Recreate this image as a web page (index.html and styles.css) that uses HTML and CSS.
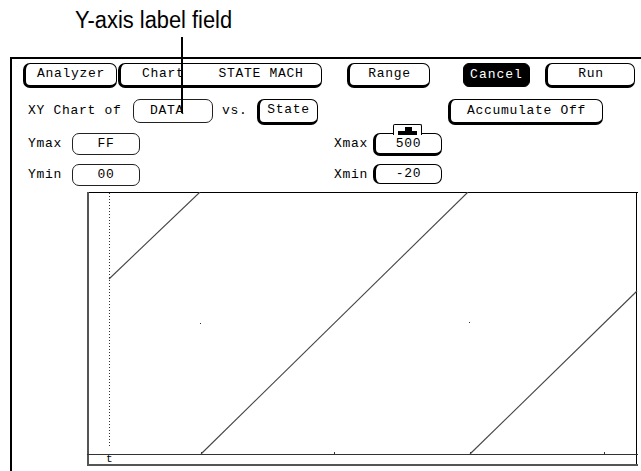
FILE: index.html
```html
<!DOCTYPE html>
<html lang="en">
<head>
    <meta charset="UTF-8">
    <title>XY Chart - Y-axis label field</title>
    <link rel="stylesheet" href="styles.css">
</head>
<body>
    <div class="callout">
        <span class="callout-text">Y-axis label field</span>
    </div>
    <div class="leader"></div>

    <div class="screen">
        <!-- top menu bar -->
        <div class="row row-menu">
            <div class="btn raised w-analyzer">Analyzer</div>
            <div class="btn raised w-chart left">Chart    STATE MACH</div>
            <div class="btn raised w-range">Range</div>
            <div class="btn inverse w-cancel">Cancel</div>
            <div class="btn raised w-run">Run</div>
        </div>

        <div class="row row-of">
            <span class="label w-xy">XY Chart of</span>
            <div class="btn flat w-data left">DATA</div>
            <span class="label w-vs">vs.</span>
            <div class="btn raised w-state">State</div>
            <div class="btn raised w-accum">Accumulate Off</div>
        </div>

        <div class="row row-limit">
            <span class="label w-ylabel">Ymax</span>
            <div class="btn flat w-yfield">FF</div>
            <span class="label w-xlabel">Xmax</span>
            <div class="btn raised w-xfield has-tab"><div class="tab"><svg width="29" height="11" viewBox="0 0 29 11"><rect x="12" y="3" width="7" height="5" fill="#000"/><rect x="5" y="7" width="19" height="4" fill="#000"/></svg></div>500</div>
        </div>

        <div class="row row-limit row-min">
            <span class="label w-ylabel">Ymin</span>
            <div class="btn flat w-yfield">00</div>
            <span class="label w-xlabel">Xmin</span>
            <div class="btn raised-left w-xfield">-20</div>
        </div>

        <div class="chart">
            <svg width="551" height="274" viewBox="0 0 551 274">
                <!-- frame -->
                <line x1="0" y1="0.5" x2="551" y2="0.5" stroke="#000"/>
                <line x1="1" y1="0" x2="1" y2="274" stroke="#555" stroke-width="2"/>
                <line x1="549.5" y1="0" x2="549.5" y2="274" stroke="#000"/>
                <line x1="0" y1="273" x2="551" y2="273" stroke="#555" stroke-width="2"/>
                <line x1="0" y1="262.5" x2="551" y2="262.5" stroke="#333"/>
                <!-- ticks -->
                <line x1="114.5" y1="260" x2="114.5" y2="262" stroke="#333"/>
                <line x1="247.5" y1="260" x2="247.5" y2="262" stroke="#333"/>
                <line x1="383.5" y1="260" x2="383.5" y2="262" stroke="#333"/>
                <line x1="517.5" y1="260" x2="517.5" y2="262" stroke="#333"/>
                <!-- cursor -->
                <line x1="22.5" y1="1" x2="22.5" y2="256" stroke="#333" stroke-dasharray="1 2"/>
                <text x="19" y="270" class="axis-t">t</text>
                <!-- grid dots -->
                <rect x="113" y="131" width="1" height="1" fill="#333"/>
                <rect x="382" y="130" width="1" height="1" fill="#333"/>
                <!-- data -->
                <polyline points="22,87 113,0" fill="none" stroke="#444" stroke-width="1.1"/>
                <polyline points="381,0 114,262" fill="none" stroke="#444" stroke-width="1.1"/>
                <polyline points="383,262 550,99" fill="none" stroke="#444" stroke-width="1.1"/>
            </svg>
        </div>
    </div>
</body>
</html>
```

FILE: styles.css
```css
body {
    margin: 0;
    background-color: #fff;
    color: #000;
    position: relative;
    width: 641px;
    height: 471px;
    overflow: hidden;
}
.callout {
    height: 57px;
    box-sizing: border-box;
    padding: 7px 0 0 75px;
}
.callout-text {
    display: inline-block;
    font-family: "Liberation Sans", Arial, sans-serif;
    font-size: 23px;
    line-height: 26px;
    transform: scaleX(0.95);
    transform-origin: left center;
}
.leader {
    position: absolute;
    left: 181px;
    top: 37px;
    width: 2px;
    height: 76px;
    background-color: #000;
    z-index: 2;
}
.screen {
    margin-left: 10px;
    height: 412px;
    border-top: 2px solid #000;
    border-left: 2px solid #000;
    font-family: "Liberation Mono", "DejaVu Sans Mono", monospace;
    font-size: 13px;
    letter-spacing: 0.7px;
}
.row {
    display: flex;
    align-items: flex-start;
}
.row-menu {
    margin-top: 4px;
    padding-left: 11px;
}
.row-of {
    margin-top: 11px;
    padding-left: 16px;
}
.row-limit {
    margin-top: 8px;
    padding-left: 16px;
}
.row-min {
    margin-top: 8px;
}
.label {
    display: block;
    height: 24px;
    line-height: 24px;
    white-space: pre;
}
.btn {
    box-sizing: border-box;
    height: 24px;
    line-height: 22px;
    text-align: center;
    white-space: pre;
    border: 1px solid #000;
    border-radius: 7px;
    position: relative;
}
.btn.left {
    text-align: left;
}
.raised {
    border-left-width: 3px;
    border-bottom-width: 3px;
    line-height: 20px;
    height: 25px;
}
.raised-left {
    border-left-width: 3px;
}
.flat {
    border-color: #222;
}
.inverse {
    background-color: #000;
    color: #fff;
    border-radius: 6px;
}

/* menu bar widths */
.w-analyzer { width: 94px; }
.w-chart { width: 204px; margin-left: 1px; padding-left: 21px; }
.w-range { width: 83px; margin-left: 25px; }
.w-cancel { width: 67px; margin-left: 33px; letter-spacing: 1px; }
.w-run { width: 90px; margin-left: 15px; }

/* second row */
.w-xy { width: 105px; }
.w-data { width: 80px; padding-left: 16px; }
.w-vs { width: 35px; margin-left: 9px; }
.w-state { width: 61px; height: 26px; }
.w-accum { width: 155px; margin-left: 130px; height: 26px; line-height: 21px; }

/* limit rows */
.w-ylabel { width: 44px; height: 22px; line-height: 22px; }
.w-yfield { width: 68px; height: 22px; line-height: 20px; }
.w-xlabel { width: 39px; margin-left: 194px; height: 22px; line-height: 22px; }
.w-xfield { width: 69px; height: 23px; line-height: 20px; }
.row-min .w-xfield { height: 20px; line-height: 18px; }
.has-tab {
    white-space: nowrap;
}

.tab {
    position: absolute;
    left: 17px;
    top: -10px;
    width: 29px;
    height: 11px;
    box-sizing: border-box;
    border: 1px solid #000;
    border-bottom: none;
    border-radius: 2px 2px 0 0;
    background-color: #fff;
}
.tab svg {
    display: block;
    margin: -1px 0 0 -1px;
}

.chart {
    margin-top: 6px;
    margin-left: 75px;
    width: 551px;
    height: 274px;
}
.chart svg {
    display: block;
}
.axis-t {
    font-family: "Liberation Mono", monospace;
    font-size: 11px;
    fill: #000;
}
```
